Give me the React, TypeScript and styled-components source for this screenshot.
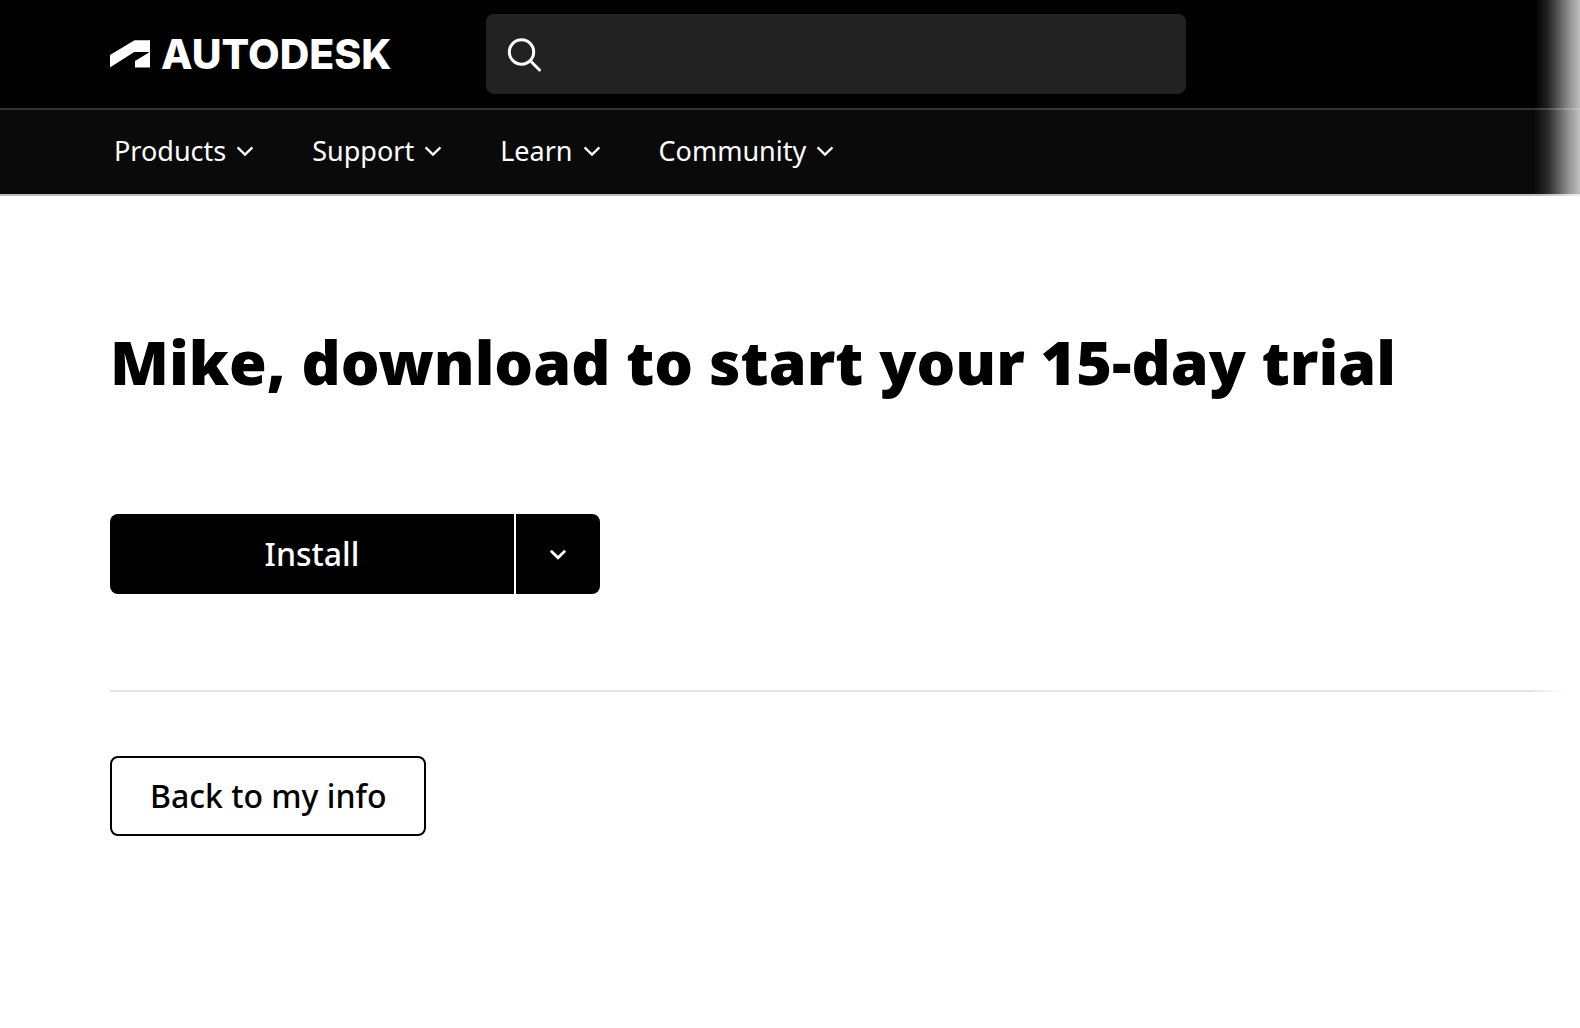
import React from "react";
import styled, { createGlobalStyle } from "styled-components";

const GlobalStyle = createGlobalStyle`
  *, *::before, *::after { box-sizing: border-box; }
  body {
    margin: 0;
    background: #fff;
    color: #000;
    font-family: "Noto Sans", "Open Sans", sans-serif;
  }
`;

const Page = styled.div`
  position: relative;
  min-height: 100vh;
  overflow-x: hidden;

  &::after {
    content: "";
    position: absolute;
    inset: 0 0 0 auto;
    width: 46px;
    pointer-events: none;
    background: linear-gradient(
      to right,
      rgba(255, 255, 255, 0),
      rgba(255, 255, 255, 0.12) 28%,
      rgba(255, 255, 255, 0.36) 55%,
      rgba(255, 255, 255, 0.6) 80%,
      rgba(255, 255, 255, 0.74)
    );
  }
`;

const Header = styled.header`
  color: #fff;
  border-bottom: 2px solid #bbb;
`;

const TopBar = styled.div`
  display: flex;
  align-items: center;
  gap: 92px;
  padding: 14px 110px;
  background: #000;
`;

const Logo = styled.a`
  display: flex;
  flex-shrink: 0;
  align-items: center;
  gap: 11px;
  width: 284px;
  color: inherit;
  text-decoration: none;
  font-family: Inter, sans-serif;
  font-size: 41px;
  line-height: 48px;
  font-weight: 800;

  svg {
    flex-shrink: 0;
  }
`;

const SearchBox = styled.label`
  display: flex;
  align-items: center;
  flex: 0 1 700px;
  height: 80px;
  padding: 0 20px;
  gap: 16px;
  border-radius: 8px;
  background: #222;
`;

const SearchInput = styled.input`
  flex: 1;
  min-width: 0;
  border: 0;
  outline: 0;
  background: transparent;
  color: #fff;
  font: 28px/40px "Noto Sans", sans-serif;
`;

const Nav = styled.nav`
  display: flex;
  align-items: center;
  gap: 58px;
  height: 86px;
  padding: 0 114px 2px;
  background: #0a0a0a;
  border-top: 2px solid #333;
`;

const NavButton = styled.button`
  display: flex;
  align-items: center;
  gap: 10px;
  padding: 0;
  border: 0;
  background: none;
  color: #fff;
  font: 27px/40px "Noto Sans", sans-serif;
  cursor: pointer;
`;

const Main = styled.main`
  padding: 130px 0 64px 110px;
`;

const Title = styled.h1`
  margin: 0 0 116px;
  font-size: 61px;
  line-height: 72px;
  font-weight: 900;
`;

const SplitButton = styled.div`
  display: flex;
  gap: 2px;
  width: 490px;
  border-radius: 8px;
  overflow: hidden;
`;

const Button = styled.button<{ $outline?: boolean }>`
  display: flex;
  align-items: center;
  justify-content: center;
  height: 80px;
  padding: 0 38px;
  border: ${(p) => (p.$outline ? "2px solid #000" : "0")};
  border-radius: ${(p) => (p.$outline ? "8px" : "0")};
  background: ${(p) => (p.$outline ? "#fff" : "#000")};
  color: ${(p) => (p.$outline ? "#000" : "#fff")};
  font: 500 32px/40px "Noto Sans", sans-serif;
  cursor: pointer;
`;

const InstallButton = styled(Button)`
  flex: 1;
`;

const ToggleButton = styled(Button)`
  width: 84px;
  padding: 0;
`;

const Divider = styled.hr`
  height: 2px;
  margin: 96px 0 64px;
  border: 0;
  background: linear-gradient(to left, #fff 6px, #e4e4e4 50px);
`;

function Chevron({ bold = false }: { bold?: boolean }) {
  return (
    <svg width="18" height="12" viewBox="0 0 18 12" fill="none" aria-hidden="true">
      <path
        d={bold ? "M2.6 3.6 9 9.8 15.4 3.6" : "M1.6 2.4 9 9.6 16.4 2.4"}
        stroke="currentColor"
        strokeWidth={bold ? 2.8 : 2.3}
        strokeLinecap={bold ? "round" : "butt"}
      />
    </svg>
  );
}

const MENUS = ["Products", "Support", "Learn", "Community"];

export default function App() {
  return (
    <Page>
      <GlobalStyle />
      <Header>
        <TopBar>
          <Logo href="#">
            <svg width="40" height="28" viewBox="0 0 40 28" fill="#fff" aria-hidden="true">
              <path d="M0 15 24.5.3H40v27.2H25v-6.4l13.6-8.3c.4-.3.3-.7-.3-.7H24.2L0 27.5z" />
            </svg>
            AUTODESK
          </Logo>
          <SearchBox>
            <svg width="36" height="36" viewBox="0 0 36 36" fill="none" stroke="#fff" strokeWidth="3" strokeLinecap="round" aria-hidden="true">
              <circle cx="15.5" cy="16" r="12.2" />
              <path d="M24.5 25 33.5 34" />
            </svg>
            <SearchInput type="search" aria-label="Search" />
          </SearchBox>
        </TopBar>
        <Nav>
          {MENUS.map((name) => (
            <NavButton key={name} type="button">
              {name}
              <Chevron />
            </NavButton>
          ))}
        </Nav>
      </Header>
      <Main>
        <Title>Mike, download to start your 15-day trial</Title>
        <SplitButton>
          <InstallButton type="button">Install</InstallButton>
          <ToggleButton type="button" aria-label="More install options">
            <Chevron bold />
          </ToggleButton>
        </SplitButton>
        <Divider />
        <Button type="button" $outline>
          Back to my info
        </Button>
      </Main>
    </Page>
  );
}
